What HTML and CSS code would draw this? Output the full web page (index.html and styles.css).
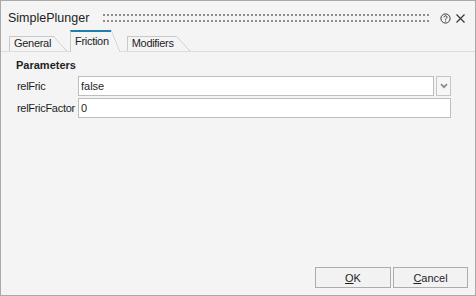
FILE: index.html
```html
<!DOCTYPE html>
<html lang="en">
<head>
  <meta charset="UTF-8" />
  <meta name="viewport" content="width=device-width, initial-scale=1.0"/>
  <title>SimplePlunger</title>
  <link rel="stylesheet" href="styles.css">
</head>
<body>

  <div class="dialog">
    <div class="titlebar">
      <span class="title">SimplePlunger</span>
      <div class="grip"><span></span><span></span></div>
      <svg class="icon-help" width="11" height="11" viewBox="0 0 11 11">
        <circle cx="5.5" cy="5.5" r="4.6" fill="none" stroke="#3a3a3a" stroke-width="1"/>
        <path d="M4 4.3 a1.5 1.5 0 1 1 2.2 1.3 c-0.5 0.3 -0.7 0.6 -0.7 1.2" fill="none" stroke="#3a3a3a" stroke-width="1"/>
        <rect x="5" y="7.6" width="1" height="1" fill="#3a3a3a"/>
      </svg>
      <svg class="icon-close" width="9" height="9" viewBox="0 0 9 9">
        <path d="M0.5 0.5 L8.5 8.5 M8.5 0.5 L0.5 8.5" stroke="#333" stroke-width="1.1"/>
      </svg>
    </div>

    <div class="tabs">
      <div class="tab">General</div>
      <div class="tab active">Friction</div>
      <div class="tab">Modifiers</div>
    </div>

    <div class="panel">
      <div class="section">Parameters</div>
      <div class="params">
        <label for="relFric">relFric</label>
        <div class="combo">
          <input type="text" id="relFric" class="field" value="false" readonly>
          <button class="combo-btn" type="button">
            <svg width="8" height="6" viewBox="0 0 8 6">
              <path d="M1 1.2 L4 4.2 L7 1.2" fill="none" stroke="#8a8a8a" stroke-width="1.7"/>
            </svg>
          </button>
        </div>

        <label for="relFricFactor">relFricFactor</label>
        <input type="text" id="relFricFactor" class="field" value="0">
      </div>
    </div>

    <div class="footer">
      <button class="botao" type="button"><u>O</u>K</button>
      <button class="botao" type="button"><u>C</u>ancel</button>
    </div>
  </div>

</body>
</html>
```

FILE: styles.css
```css
* {
  box-sizing: border-box;
  font-family: "Liberation Sans", Arial, sans-serif;
}

body {
  margin: 0;
  background-color: #f4f4f4;
}

.dialog {
  width: 476px;
  height: 296px;
  border: 1px solid #a9a9a9;
  background: #f4f4f4;
  display: flex;
  flex-direction: column;
  color: #1e1e1e;
}

/* barra de titulo */
.titlebar {
  height: 28px;
  padding: 6px 10px 0 7px;
  display: flex;
  align-items: center;
}

.title {
  font-size: 12.5px;
  color: #222;
  line-height: 22px;
}

.grip {
  flex: 1;
  margin: 0 11px 0 14px;
  display: flex;
  flex-direction: column;
  gap: 4px;
}

.grip span {
  display: block;
  height: 2px;
  background-image: repeating-linear-gradient(90deg, #8e8e8e 0 2px, transparent 2px 4px);
}

.icon-close {
  margin-left: 5px;
}

/* abas */
.tabs {
  height: 23px;
  padding-left: 8px;
  display: flex;
  align-items: flex-end;
  border-bottom: 1px solid #dcdcdc;
}

.tab {
  position: relative;
  height: 15px;
  padding: 0 2px 0 4px;
  margin-right: 17px;
  border-left: 1px solid #c9c9c9;
  border-top: 1px solid #c9c9c9;
  font-size: 11px;
  letter-spacing: -0.3px;
  line-height: 12px;
  color: #1e1e1e;
}

.tab::after {
  content: "";
  position: absolute;
  top: -1px;
  right: -14px;
  bottom: 0;
  width: 14px;
  background: linear-gradient(to top right, transparent calc(50% - 0.6px), #c9c9c9 50%, transparent calc(50% + 0.6px));
}

.tab.active {
  height: 22px;
  margin-bottom: -1px;
  padding-top: 3px;
  border-top: 2px solid #1f7fae;
  background: #f4f4f4;
  z-index: 1;
  margin-right: 16px;
}

.tab.active::after {
  top: -2px;
  right: -9px;
  width: 9px;
  background: linear-gradient(to top right, #f4f4f4 calc(50% - 0.6px), #c9c9c9 50%, transparent calc(50% + 0.6px));
}

/* painel */
.panel {
  padding: 6px 24px 0 15px;
}

.section {
  font-size: 11px;
  font-weight: bold;
  line-height: 14px;
  margin-bottom: 4px;
}

.params {
  display: grid;
  grid-template-columns: 62px 1fr;
  row-gap: 2px;
  align-items: center;
}

label {
  font-size: 11px;
  letter-spacing: -0.3px;
  padding-left: 1px;
}

.field {
  height: 20px;
  width: 100%;
  margin: 0;
  padding: 0 2px;
  border: 1px solid #bdbdbd;
  background: #fff;
  font-size: 11px;
  color: #1e1e1e;
  outline: none;
}

.combo {
  display: flex;
  gap: 2px;
}

.combo-btn {
  width: 15px;
  height: 20px;
  flex: none;
  margin: 0;
  padding: 0;
  border: 1px solid #c6c6c6;
  background: #f6f6f6;
  display: flex;
  align-items: center;
  justify-content: center;
}

/* botoes */
.footer {
  margin-top: auto;
  padding: 0 7px 7px 0;
  display: flex;
  justify-content: flex-end;
  gap: 2px;
}

.botao {
  width: 76px;
  height: 21px;
  margin: 0;
  padding: 0;
  border: 1px solid #adadad;
  background: #f2f2f2;
  font-size: 11px;
  color: #1e1e1e;
}

.botao:last-child {
  width: 75px;
}
```
